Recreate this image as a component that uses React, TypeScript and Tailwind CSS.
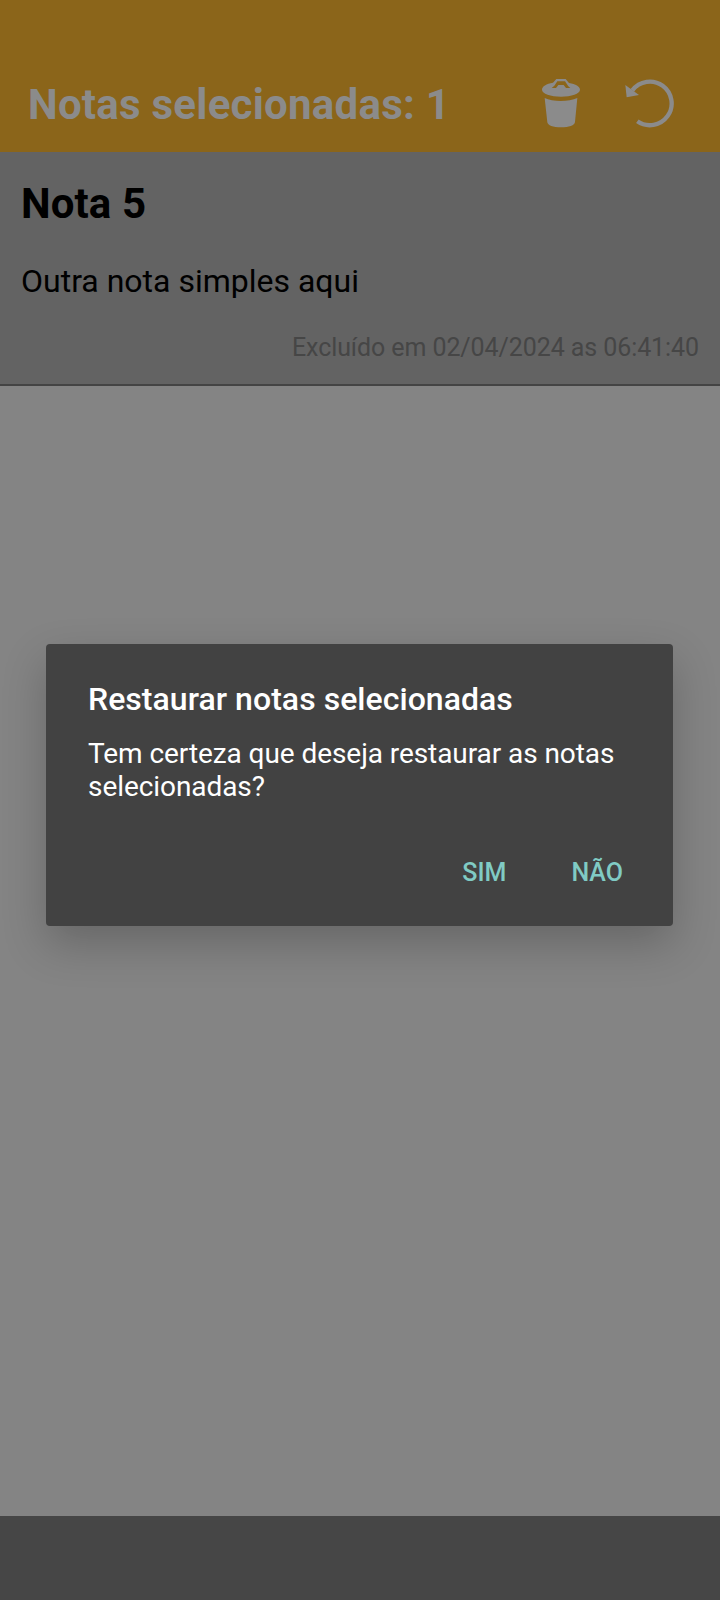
function TrashIcon() {
  return (
    <svg width="38" height="49" viewBox="0 0 114 147" fill="#8b8b8b" aria-hidden="true">
      <path
        fillRule="evenodd"
        d="M33 11 L43 0 H71 L81 12 C101 15 114 23 114 32 C114 44 88 53 57 53 C26 53 0 44 0 32 C0 22 13 14 33 11 Z M29 27 H42 L49 18 H65 L72 27 H85 L79 22 L69 7 H46 L37 20 Z"
      />
      <path d="M8 57 C32 69 80 69 106 57 L99 129 C98 139 81 145 57 145 C33 145 17 139 16 130 Z" />
    </svg>
  );
}

function RestoreIcon() {
  return (
    <svg width="49" height="49" viewBox="0 0 147 147" aria-hidden="true">
      <path d="M22 34 A65.5 65.5 0 1 1 37 127" fill="none" stroke="#8b8b8b" strokeWidth="13" />
      <path d="M1 18 L5 55 L42 48 Z" fill="#8b8b8b" />
    </svg>
  );
}

export default function App() {
  return (
    <div className="relative flex h-[1600px] w-[720px] flex-col overflow-hidden bg-[#848484] font-['Roboto',sans-serif]">
      <header className="flex h-[152px] items-end bg-[#8b651a] pr-[46px] pl-7">
        <h1 className="mb-[23px] flex-1 text-[42px] leading-[49px] font-bold tracking-[0.25px] whitespace-nowrap text-[#8b8b8b]">
          Notas selecionadas: 1
        </h1>
        <div className="mb-6 flex items-center gap-[45px]">
          <button aria-label="Excluir"><TrashIcon /></button>
          <button aria-label="Restaurar"><RestoreIcon /></button>
        </div>
      </header>
      <article className="flex h-[234px] flex-col border-b-2 border-[#444444] bg-[#636363] px-[21px] pt-[27px] text-black">
        <h2 className="text-[42px] leading-[49px] font-bold tracking-[0.1px]">Nota 5</h2>
        <p className="mt-[34px] text-[32px] leading-[38px]">Outra nota simples aqui</p>
        <p className="mt-[33px] text-right text-[25px] leading-[30px] tracking-[-0.08px] text-[#464646]">
          Excluído em 02/04/2024 as 06:41:40
        </p>
      </article>
      <main className="flex-1" />
      <footer className="h-[84px] bg-[#464646]" />
      <div
        role="dialog"
        className="absolute top-[644px] left-[46px] h-[282px] w-[627px] rounded bg-[#424242] px-[42px] pt-[36px] text-white shadow-[0_18px_44px_rgba(0,0,0,0.22)]"
      >
        <h3 className="text-[32px] leading-[38px] font-medium tracking-[0.04px] whitespace-nowrap">Restaurar notas selecionadas</h3>
        <p className="mt-[19px] text-[28px] leading-[33px] tracking-[-0.07px]">
          Tem certeza que deseja restaurar as notas
          <br />
          selecionadas?
        </p>
        <div className="mt-[55px] flex justify-end gap-[65px] pr-[8px] text-[25px] leading-[30px] font-medium text-[#80cbc4]">
          <button>SIM</button>
          <button>NÃO</button>
        </div>
      </div>
    </div>
  );
}
